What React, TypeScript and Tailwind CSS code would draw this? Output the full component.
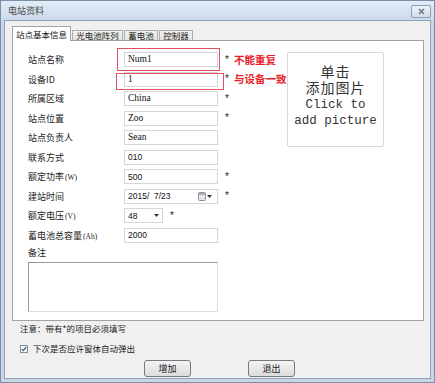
import React from "react";

const cjk = "font-['Noto_Sans_CJK_SC',sans-serif]";

function Field({
  label,
  value,
  star,
  note,
  serif,
}: {
  label: React.ReactNode;
  value: string;
  star?: boolean;
  note?: string;
  serif?: boolean;
}) {
  return (
    <div className="flex h-[19.5px] items-center">
      <div className={`w-[96px] text-[9px] leading-none text-[#222] ${cjk}`}>{label}</div>
      <div
        className={`flex h-[15px] w-[94px] items-center border border-[#d6d6d6] bg-white pl-[3px] leading-none text-[#111] ${
          serif ? "font-['Liberation_Serif',serif] text-[9.5px]" : "font-['Liberation_Sans',sans-serif] text-[8.5px]"
        }`}
      >
        {value}
      </div>
      {star && <span className="ml-[7px] font-['Liberation_Sans',sans-serif] text-[10px] leading-none text-[#222]">*</span>}
      {note && <span className={`ml-[5px] text-[10.5px] font-bold leading-none text-[#e8202a] ${cjk}`}>{note}</span>}
    </div>
  );
}

function Unit({ text, unit }: { text: string; unit: string }) {
  return (
    <span>
      {text}
      <span className="ml-[1px] font-['Liberation_Serif',serif] text-[7.5px]">({unit})</span>
    </span>
  );
}

export default function App() {
  return (
    <div className="flex h-[383px] w-[435px] flex-col border border-[#7b8ea6] bg-[#c8d6e8]">
      {/* title bar */}
      <div className="flex h-[19px] items-center justify-between bg-gradient-to-b from-[#e3ecf6] to-[#cbdaeb] pl-[7px] pr-[3px]">
        <span className={`text-[9px] leading-none text-[#4a4a4a] ${cjk}`}>电站资料</span>
        <div className="mt-[2px] flex h-[13px] w-[20px] items-center justify-center rounded-[2px] border border-[#8d9db3] bg-gradient-to-b from-[#eef3f9] to-[#d3deeb]">
          <svg width="7" height="7" viewBox="0 0 7 7">
            <path d="M1 1L6 6M6 1L1 6" stroke="#6c7787" strokeWidth="1.6" />
          </svg>
        </div>
      </div>

      {/* body */}
      <div className="mx-[3px] mb-[3px] flex flex-1 flex-col border border-[#93a3b6] bg-[#f0f0f0] pl-[7px] pr-[6px] pt-[5px]">
        {/* tabs */}
        <div className="relative z-10 flex h-[14px] items-end gap-[1px]">
          <div className={`-mb-px flex h-[15px] w-[59px] items-center justify-center border border-b-0 border-[#a3a3a3] bg-white text-[8.5px] leading-none text-[#111] ${cjk}`}>
            站点基本信息
          </div>
          {[
            ["光电池阵列", "w-[51px]"],
            ["蓄电池", "w-[34px]"],
            ["控制器", "w-[34px]"],
          ].map(([t, w]) => (
            <div
              key={t}
              className={`flex h-[10px] ${w} items-center justify-center border border-b-0 border-[#acacac] bg-gradient-to-b from-[#f3f3f3] to-[#e3e3e3] text-[8.5px] leading-none text-[#222] ${cjk}`}
            >
              {t}
            </div>
          ))}
        </div>

        {/* panel */}
        <div className="relative flex h-[281px] w-[412px] border border-[#a3a3a3] bg-white pl-[15px] pt-[9px]">
          <div className="flex w-[259px] flex-col">
            <Field label="站点名称" value="Num1" star note="不能重复" serif />
            <Field label="设备ID" value="1" star note="与设备一致" serif />
            <Field label="所属区域" value="China" star serif />
            <Field label="站点位置" value="Zoo" star serif />
            <Field label="站点负责人" value="Sean" serif />
            <Field label="联系方式" value="010" />
            <Field label={<Unit text="额定功率" unit="W" />} value="500" star />

            <div className="flex h-[19.5px] items-center">
              <div className={`w-[96px] text-[9px] leading-none text-[#222] ${cjk}`}>建站时间</div>
              <div className="flex h-[15px] w-[94px] items-center justify-between border border-[#d6d6d6] bg-white pl-[3px] pr-[5px] font-['Liberation_Sans',sans-serif] text-[8.5px] leading-none text-[#111]">
                <span>2015/&nbsp; 7/23</span>
                <span className="flex items-center gap-[1px]">
                  <svg width="8" height="9" viewBox="0 0 8 9">
                    <rect x="0.5" y="0.5" width="7" height="8" rx="1" fill="#e4e6e9" stroke="#8a8f96" />
                    <rect x="1" y="1" width="6" height="2" fill="#a9b0b8" />
                  </svg>
                  <svg width="5" height="3" viewBox="0 0 5 3">
                    <path d="M0 0H5L2.5 3Z" fill="#333" />
                  </svg>
                </span>
              </div>
              <span className="ml-[7px] font-['Liberation_Sans',sans-serif] text-[10px] leading-none text-[#222]">*</span>
            </div>

            <div className="flex h-[19.5px] items-center">
              <div className={`w-[96px] text-[9px] leading-none text-[#222] ${cjk}`}>
                <Unit text="额定电压" unit="V" />
              </div>
              <div className="flex h-[15px] w-[39px] items-center justify-between border border-[#d6d6d6] bg-white pl-[3px] pr-[3px] font-['Liberation_Sans',sans-serif] text-[8.5px] leading-none text-[#111]">
                <span>48</span>
                <svg width="5" height="3" viewBox="0 0 5 3">
                  <path d="M0 0H5L2.5 3Z" fill="#333" />
                </svg>
              </div>
              <span className="ml-[7px] font-['Liberation_Sans',sans-serif] text-[10px] leading-none text-[#222]">*</span>
            </div>

            <Field label={<Unit text="蓄电池总容量" unit="Ah" />} value="2000" />

            <div className={`mt-[3px] text-[9px] leading-none text-[#222] ${cjk}`}>备注</div>
            <div className="mt-[5px] h-[50px] w-[190px] border border-[#dcdcdc] border-l-[#9a9a9a] border-t-[#9a9a9a] bg-white" />
          </div>

          <div className="mt-[2px] h-[95px] w-[97px] rounded-[2px] border border-[#d9d9d9] pt-[13px] text-center font-['Liberation_Mono',monospace] text-[12.5px] leading-[15.2px] text-[#333]">
            <span className={`text-[14px] leading-[10px] tracking-[1px] ${cjk}`}>
              单击
              <br />
              添加图片
            </span>
            <br />
            Click to
            <br />
            add picture
          </div>

          {/* annotation boxes */}
          <div className="pointer-events-none absolute left-[104px] top-[7px] h-[23px] w-[103px] border border-[#e0505e]" />
          <div className="pointer-events-none absolute left-[103px] top-[32px] h-[17px] w-[108px] border border-[#e0505e]" />
        </div>

        {/* footer */}
        <div className={`ml-[8px] mt-[1px] h-[13px] text-[8.5px] leading-[13px] text-[#222] ${cjk}`}>注意：带有*的项目必须填写</div>
        <div className="ml-[8px] mt-[7px] flex h-[13px] items-center gap-[5px]">
          <svg width="8" height="8" viewBox="0 0 8 8">
            <rect x="0.5" y="0.5" width="7" height="7" fill="#f6f8fb" stroke="#8e8f8f" />
            <path d="M1.8 4.2L3.3 5.7L6.3 2" fill="none" stroke="#3b5a8a" strokeWidth="1.2" />
          </svg>
          <span className={`text-[8.5px] leading-none text-[#222] ${cjk}`}>下次是否应许窗体自动弹出</span>
        </div>
        <div className="ml-[132px] mt-[5px] flex gap-[57px]">
          {["增加", "退出"].map((b) => (
            <div
              key={b}
              className={`flex h-[17px] w-[47px] items-center justify-center rounded-[3px] border border-[#7a7a7a] bg-gradient-to-b from-[#f4f4f4] to-[#dcdcdc] text-[9px] leading-none text-[#222] ${cjk}`}
            >
              {b}
            </div>
          ))}
        </div>
      </div>
    </div>
  );
}
